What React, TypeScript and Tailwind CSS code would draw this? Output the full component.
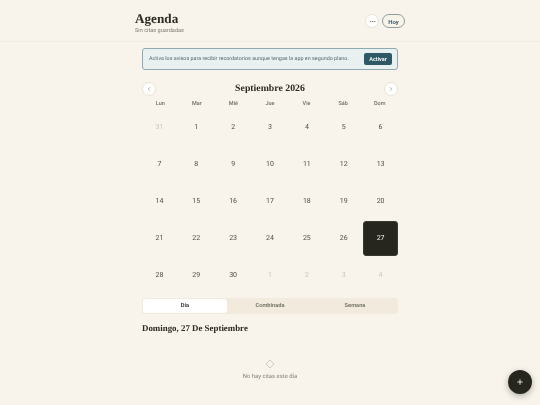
import React from 'react';
import { ChevronLeft, ChevronRight, Ellipsis, Plus } from 'lucide-react';

const serif = "font-['Liberation_Serif','DejaVu_Serif',serif]";
const sans = "font-['Roboto','Liberation_Sans',sans-serif]";

const weekDays = ['Lun', 'Mar', 'Mié', 'Jue', 'Vie', 'Sáb', 'Dom'];

const days = [
  { n: 31, muted: true }, { n: 1 }, { n: 2 }, { n: 3 }, { n: 4 }, { n: 5 }, { n: 6 },
  { n: 7 }, { n: 8 }, { n: 9 }, { n: 10 }, { n: 11 }, { n: 12 }, { n: 13 },
  { n: 14 }, { n: 15 }, { n: 16 }, { n: 17 }, { n: 18 }, { n: 19 }, { n: 20 },
  { n: 21 }, { n: 22 }, { n: 23 }, { n: 24 }, { n: 25 }, { n: 26 }, { n: 27, selected: true },
  { n: 28 }, { n: 29 }, { n: 30 }, { n: 1, muted: true }, { n: 2, muted: true }, { n: 3, muted: true }, { n: 4, muted: true },
];

export default function App() {
  return (
    <div className="h-[405px] w-[540px] bg-[#f8f4ec]">
      <div className={`relative h-[405px] w-[540px] overflow-hidden text-[#2b2a22] will-change-transform [text-rendering:geometricPrecision] ${sans}`}>
        {/* Header */}
        <header className="flex h-[42px] items-start justify-between border-b border-[#f1ecdf] px-[135px] pt-[12px]">
          <div>
            <h1 className={`text-[13.2px] font-bold leading-[14px] ${serif}`}>Agenda</h1>
            <p className="mt-[1px] text-[5.6px] leading-[9px] text-[#7f7d6f]">Sin citas guardadas</p>
          </div>
          <div className="mt-[2px] flex items-center gap-[3px]">
            <button className="flex h-[14px] w-[14px] items-center justify-center rounded-full border border-[#e8e2d4] bg-white text-[#6b6a5e]">
              <Ellipsis className="h-[7px] w-[7px]" />
            </button>
            <button className="flex h-[14px] w-[23px] items-center justify-center rounded-full border border-[#8d9c9c] bg-[#f8f4ec] text-[6px] font-semibold text-[#33525c]">
              Hoy
            </button>
          </div>
        </header>

        <main className="flex flex-col px-[142px] pt-[6px]">
          {/* Banner */}
          <div className="flex h-[22px] items-center justify-between rounded-[3px] border border-[#8fa8b2] bg-[#e8f0f0] pl-[6px] pr-[5px]">
            <p className="whitespace-nowrap text-[5.4px] text-[#566b74]">Activa los avisos para recibir recordatorios aunque tengas la app en segundo plano.</p>
            <button className="flex h-[12px] w-[28px] items-center justify-center rounded-[2px] bg-[#2f5866] text-[5.5px] font-semibold text-white">
              Activar
            </button>
          </div>

          {/* Month nav */}
          <div className="mt-[12px] flex h-[14px] items-center justify-between">
            <button className="flex h-[14px] w-[14px] items-center justify-center rounded-full border border-[#e8e2d4] bg-white text-[#6b6a5e]">
              <ChevronLeft className="h-[6px] w-[6px]" />
            </button>
            <h2 className={`text-[9.8px] font-bold ${serif}`}>Septiembre 2026</h2>
            <button className="flex h-[14px] w-[14px] items-center justify-center rounded-full border border-[#e8e2d4] bg-white text-[#6b6a5e]">
              <ChevronRight className="h-[6px] w-[6px]" />
            </button>
          </div>

          {/* Calendar */}
          <div className="mt-[3px] grid h-[10px] grid-cols-7 items-center text-center text-[5.5px] font-medium text-[#6f6e62]">
            {weekDays.map((d) => (
              <span key={d}>{d}</span>
            ))}
          </div>
          <div className="mt-[0.5px] grid grid-cols-7 gap-x-[2px] gap-y-[1.5px]">
            {days.map((d, i) => (
              <div
                key={i}
                className={`flex h-[35.5px] items-center justify-center rounded-[3px] text-[7px] ${
                  d.selected
                    ? 'border border-[#3a392f] bg-[#26261e] text-[#f8f4ec]'
                    : d.muted
                      ? 'text-[#c9c6b8]'
                      : 'text-[#4d4c42]'
                }`}
              >
                {d.n}
              </div>
            ))}
          </div>

          {/* Tabs */}
          <div className="mt-[4.5px] flex h-[16px] items-stretch rounded-[3px] bg-[#f2ebdd] p-[1px] text-[5.7px] font-semibold text-[#6f6e62]">
            <button className="w-[84px] rounded-[3px] bg-white text-[#2b2a22]">Día</button>
            <button className="w-[86px]">Combinada</button>
            <button className="flex-1">Semana</button>
          </div>

          <h3 className={`mt-[8px] text-[8.9px] font-bold leading-[12px] ${serif}`}>Domingo, 27 De Septiembre</h3>

          {/* Empty state */}
          <div className="mt-[25px] flex flex-col items-center">
            <svg width="10" height="10" viewBox="0 0 10 10" fill="none" stroke="#bdb9a8" strokeWidth="0.7">
              <path d="M5 1 L9 5 L5 9 L1 5 Z" />
            </svg>
            <p className="mt-[4.5px] text-[5.9px] text-[#7f7d6f]">No hay citas este día</p>
          </div>
        </main>

        {/* FAB */}
        <button className="absolute bottom-[11px] right-[8px] flex h-[24px] w-[24px] items-center justify-center rounded-full bg-[#26261e] text-white shadow-[0_2px_6px_rgba(0,0,0,0.3)]">
          <Plus className="h-[8px] w-[8px]" strokeWidth={2.5} />
        </button>
      </div>
    </div>
  );
}
